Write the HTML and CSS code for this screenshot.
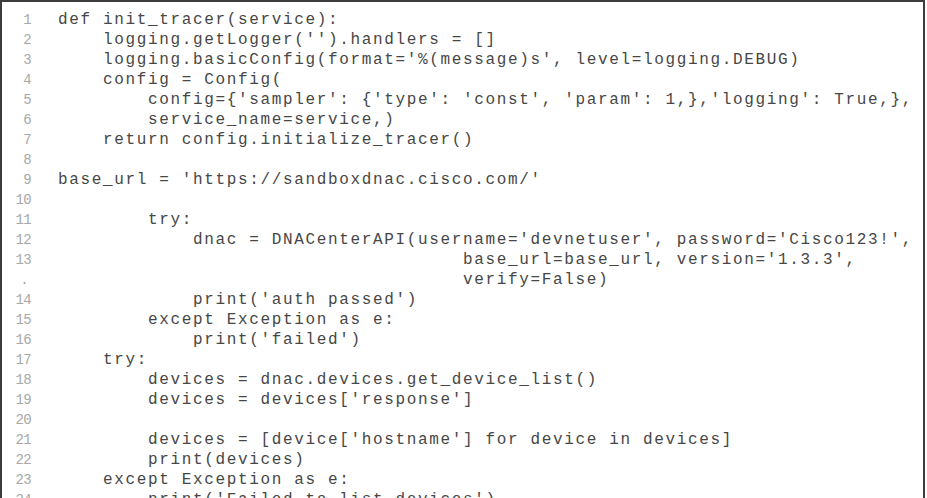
FILE: index.html
```html
<!DOCTYPE html>
<html lang="en">
<head>
  <meta charset="UTF-8" />
  <title>init_tracer listing</title>
  <link rel="stylesheet" href="styles.css">
</head>
<body>

  <!-- Code listing -->
  <div class="listing">
    <div class="row"><span class="num">1</span><span class="code">def init_tracer(service):</span></div>
    <div class="row"><span class="num">2</span><span class="code">    logging.getLogger('').handlers = []</span></div>
    <div class="row"><span class="num">3</span><span class="code">    logging.basicConfig(format='%(message)s', level=logging.DEBUG)</span></div>
    <div class="row"><span class="num">4</span><span class="code">    config = Config(</span></div>
    <div class="row"><span class="num">5</span><span class="code">        config={'sampler': {'type': 'const', 'param': 1,},'logging': True,},</span></div>
    <div class="row"><span class="num">6</span><span class="code">        service_name=service,)</span></div>
    <div class="row"><span class="num">7</span><span class="code">    return config.initialize_tracer()</span></div>
    <div class="row"><span class="num">8</span><span class="code"></span></div>
    <div class="row"><span class="num">9</span><span class="code">base_url = 'https://sandboxdnac.cisco.com/'</span></div>
    <div class="row"><span class="num">10</span><span class="code"></span></div>
    <div class="row"><span class="num">11</span><span class="code">        try:</span></div>
    <div class="row"><span class="num">12</span><span class="code">            dnac = DNACenterAPI(username='devnetuser', password='Cisco123!',</span></div>
    <div class="row"><span class="num">13</span><span class="code">                                    base_url=base_url, version='1.3.3',</span></div>
    <div class="row"><span class="num dot">.</span><span class="code">                                    verify=False)</span></div>
    <div class="row"><span class="num">14</span><span class="code">            print('auth passed')</span></div>
    <div class="row"><span class="num">15</span><span class="code">        except Exception as e:</span></div>
    <div class="row"><span class="num">16</span><span class="code">            print('failed')</span></div>
    <div class="row"><span class="num">17</span><span class="code">    try:</span></div>
    <div class="row"><span class="num">18</span><span class="code">        devices = dnac.devices.get_device_list()</span></div>
    <div class="row"><span class="num">19</span><span class="code">        devices = devices['response']</span></div>
    <div class="row"><span class="num">20</span><span class="code"></span></div>
    <div class="row"><span class="num">21</span><span class="code">        devices = [device['hostname'] for device in devices]</span></div>
    <div class="row"><span class="num">22</span><span class="code">        print(devices)</span></div>
    <div class="row"><span class="num">23</span><span class="code">    except Exception as e:</span></div>
    <div class="row"><span class="num">24</span><span class="code">        print('Failed to list devices')</span></div>
  </div>

</body>
</html>
```

FILE: styles.css
```css
* {
  box-sizing: border-box;
}

body {
  margin: 0;
  height: 498px;
  overflow: hidden;
  background-color: #ffffff;
}

/* Listing frame */
.listing {
  width: 925px;
  border: 2px solid #3c3c3c;
  border-bottom: none;
  padding-top: 8px;
  font-family: 'Liberation Mono', 'Courier New', monospace;
}

.row {
  display: flex;
  height: 20px;
  line-height: 20px;
}

.num {
  width: 29px;
  flex-shrink: 0;
  text-align: right;
  font-size: 14px;
  letter-spacing: -0.6px;
  color: #a8a8a8;
}

.num.dot {
  padding-right: 3px;
}

.code {
  margin-left: 27px;
  white-space: pre;
  font-size: 16px;
  letter-spacing: 1.65px;
  color: #474747;
}
```
